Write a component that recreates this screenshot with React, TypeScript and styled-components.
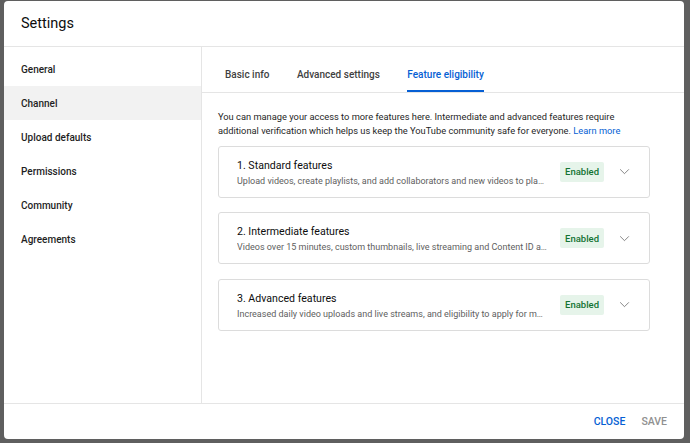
import React, { useState } from 'react';
import styled, { createGlobalStyle } from 'styled-components';

const GlobalStyle = createGlobalStyle`
  html, body {
    margin: 0;
    padding: 0;
    background: #5f5f5f;
    font-family: Roboto, "Liberation Sans", Arial, sans-serif;
  }
`;

const navItems = ['General', 'Channel', 'Upload defaults', 'Permissions', 'Community', 'Agreements'];
const tabs = ['Basic info', 'Advanced settings', 'Feature eligibility'];

const features = [
    {
        title: '1. Standard features',
        description: 'Upload videos, create playlists, and add collaborators and new videos to playlists',
    },
    {
        title: '2. Intermediate features',
        description: 'Videos over 15 minutes, custom thumbnails, live streaming and Content ID appeals',
    },
    {
        title: '3. Advanced features',
        description: 'Increased daily video uploads and live streams, and eligibility to apply for monetization',
    },
];

const ChevronDown = () => (
    <svg width="13" height="13" viewBox="0 0 24 24" fill="none">
        <path d="M4 8l8 8 8-8" stroke="#606060" strokeWidth="1.4" />
    </svg>
);

const App: React.FC = () => {
    const [activeNav, setActiveNav] = useState('Channel');
    const [activeTab, setActiveTab] = useState('Feature eligibility');

    return (
        <>
            <GlobalStyle />
            <Page>
                <Dialog>
                    <Header>
                        <Title>Settings</Title>
                    </Header>
                    <Body>
                        <Sidebar>
                            {navItems.map((item) => (
                                <NavItem key={item} $active={item === activeNav} onClick={() => setActiveNav(item)}>
                                    {item}
                                </NavItem>
                            ))}
                        </Sidebar>
                        <Main>
                            <TabBar>
                                {tabs.map((tab) => (
                                    <Tab key={tab} $active={tab === activeTab} onClick={() => setActiveTab(tab)}>
                                        {tab}
                                    </Tab>
                                ))}
                            </TabBar>
                            <Content>
                                <Intro>
                                    You can manage your access to more features here. Intermediate and advanced features require
                                    additional verification which helps us keep the YouTube community safe for everyone.{' '}
                                    <LearnMore href="#">Learn more</LearnMore>
                                </Intro>
                                {features.map((f) => (
                                    <FeatureCard key={f.title}>
                                        <FeatureText>
                                            <FeatureTitle>{f.title}</FeatureTitle>
                                            <FeatureDesc>{f.description}</FeatureDesc>
                                        </FeatureText>
                                        <Badge>Enabled</Badge>
                                        <ExpandButton>
                                            <ChevronDown />
                                        </ExpandButton>
                                    </FeatureCard>
                                ))}
                            </Content>
                        </Main>
                    </Body>
                    <Footer>
                        <FooterButton $primary>Close</FooterButton>
                        <FooterButton>Save</FooterButton>
                    </Footer>
                </Dialog>
            </Page>
        </>
    );
};

export default App;

const Page = styled.div`
    width: 690px;
    height: 443px;
    padding: 1px 6px 4px 4px;
    box-sizing: border-box;
    display: flex;
`;

const Dialog = styled.div`
    flex: 1;
    display: flex;
    flex-direction: column;
    background: #fff;
    border-radius: 4px;
    overflow: hidden;
`;

const Header = styled.div`
    height: 46px;
    flex-shrink: 0;
    display: flex;
    align-items: center;
    padding: 0 17px 1px;
    border-bottom: 1px solid #e5e5e5;
    box-sizing: border-box;
`;

const Title = styled.h1`
    margin: 0;
    font-size: 14.5px;
    font-weight: 400;
    color: #0d0d0d;
`;

const Body = styled.div`
    flex: 1;
    display: flex;
    min-height: 0;
`;

const Sidebar = styled.div`
    width: 197px;
    flex-shrink: 0;
    border-right: 1px solid #e5e5e5;
    padding-top: 5px;
`;

const NavItem = styled.div<{ $active?: boolean }>`
    height: 34px;
    display: flex;
    align-items: center;
    padding: 0 17px;
    font-size: 10px;
    font-weight: 500;
    color: #1f1f1f;
    background: ${(p) => (p.$active ? '#f2f2f2' : 'transparent')};
    cursor: pointer;
`;

const Main = styled.div`
    flex: 1;
    min-width: 0;
    display: flex;
    flex-direction: column;
`;

const TabBar = styled.div`
    height: 46px;
    display: flex;
    align-items: stretch;
    padding: 0 5px 0 23px;
    gap: 27.5px;
    border-bottom: 1px solid #e5e5e5;
    box-sizing: border-box;
`;

const Tab = styled.div<{ $active?: boolean }>`
    display: flex;
    align-items: center;
    font-size: 10px;
    font-weight: 500;
    color: ${(p) => (p.$active ? '#065fd4' : '#3f3f3f')};
    border-bottom: 2px solid ${(p) => (p.$active ? '#065fd4' : 'transparent')};
    padding-top: 11px;
    cursor: pointer;
`;

const Content = styled.div`
    padding: 17px 34px 0 16px;
    display: flex;
    flex-direction: column;
    gap: 14.5px;
`;

const Intro = styled.p`
    margin: 0 0 -7px;
    font-size: 9.3px;
    line-height: 14px;
    color: #1f1f1f;
`;

const LearnMore = styled.a`
    color: #065fd4;
    text-decoration: none;
`;

const FeatureCard = styled.div`
    height: 52px;
    box-sizing: border-box;
    border: 1px solid #dcdcdc;
    border-radius: 3px;
    display: flex;
    align-items: center;
    padding: 0 18px;
`;

const FeatureText = styled.div`
    flex: 1;
    min-width: 0;
    display: flex;
    flex-direction: column;
    gap: 4px;
    padding-top: 1px;
`;

const FeatureTitle = styled.div`
    font-size: 10.6px;
    font-weight: 400;
    color: #0d0d0d;
`;

const FeatureDesc = styled.div`
    font-size: 9px;
    color: #606060;
    white-space: nowrap;
    overflow: hidden;
    text-overflow: ellipsis;
`;

const Badge = styled.div`
    margin-left: 12px;
    background: #e6f4ea;
    color: #137333;
    font-size: 9.5px;
    font-weight: 500;
    padding: 0 5px;
    height: 20px;
    display: flex;
    align-items: center;
    border-radius: 2px;
    flex-shrink: 0;
`;

const ExpandButton = styled.div`
    margin-left: 14px;
    display: flex;
    align-items: center;
`;

const Footer = styled.div`
    height: 35px;
    flex-shrink: 0;
    border-top: 1px solid #e5e5e5;
    display: flex;
    align-items: center;
    justify-content: flex-end;
    gap: 16px;
    padding: 0 17px 0 0;
`;

const FooterButton = styled.button<{ $primary?: boolean }>`
    border: none;
    background: none;
    padding: 0;
    font-family: inherit;
    text-transform: uppercase;
    font-size: 10.5px;
    font-weight: 500;
    color: ${(p) => (p.$primary ? '#065fd4' : '#909090')};
    cursor: pointer;
`;
